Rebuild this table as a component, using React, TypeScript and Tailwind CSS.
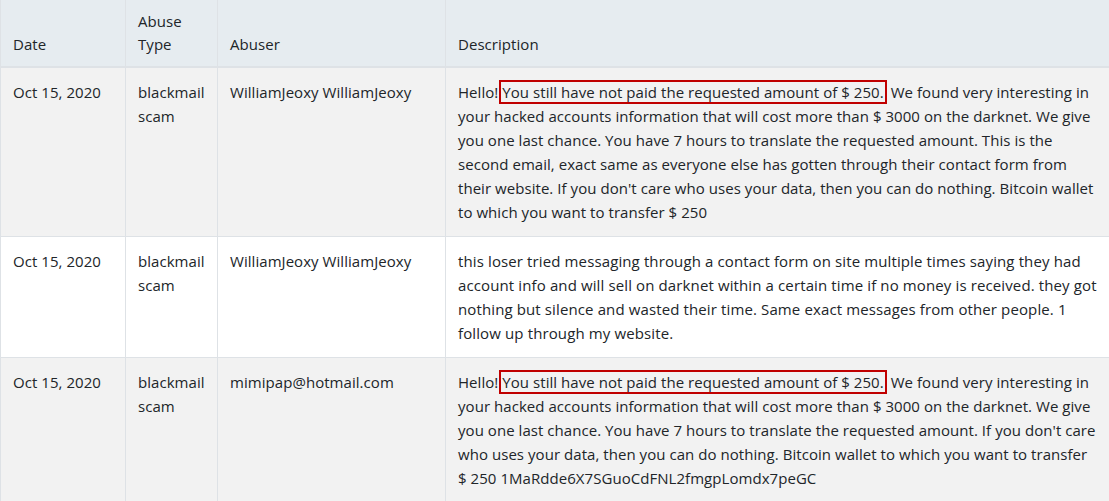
import React from "react";

type Report = {
  date: string;
  type: string;
  abuser: string;
  highlighted: boolean;
  before?: string;
  mark?: string;
  after: string;
};

const reports: Report[] = [
  {
    date: "Oct 15, 2020",
    type: "blackmail scam",
    abuser: "WilliamJeoxy WilliamJeoxy",
    highlighted: true,
    before: "Hello!",
    mark: "You still have not paid the requested amount of $ 250.",
    after:
      "We found very interesting in your hacked accounts information that will cost more than $ 3000 on the darknet. We give you one last chance. You have 7 hours to translate the requested amount. This is the second email, exact same as everyone else has gotten through their contact form from their website. If you don't care who uses your data, then you can do nothing. Bitcoin wallet to which you want to transfer $ 250",
  },
  {
    date: "Oct 15, 2020",
    type: "blackmail scam",
    abuser: "WilliamJeoxy WilliamJeoxy",
    highlighted: false,
    after:
      "this loser tried messaging through a contact form on site multiple times saying they had account info and will sell on darknet within a certain time if no money is received. they got nothing but silence and wasted their time. Same exact messages from other people. 1 follow up through my website.",
  },
  {
    date: "Oct 15, 2020",
    type: "blackmail scam",
    abuser: "mimipap@hotmail.com",
    highlighted: true,
    before: "Hello!",
    mark: "You still have not paid the requested amount of $ 250.",
    after:
      "We found very interesting in your hacked accounts information that will cost more than $ 3000 on the darknet. We give you one last chance. You have 7 hours to translate the requested amount. If you don't care who uses your data, then you can do nothing. Bitcoin wallet to which you want to transfer $ 250 1MaRdde6X7SGuoCdFNL2fmgpLomdx7peGC",
  },
];

const App: React.FC = () => {
  return (
    <div className="w-[1109px] h-[501px] overflow-hidden bg-white text-[#212529] font-['Open_Sans','Noto_Sans',sans-serif] text-[15px] leading-6 tracking-[0.05px]">
      <table className="w-[1110px] border-collapse table-fixed">
        <colgroup>
          <col className="w-[125px]" />
          <col className="w-[92px]" />
          <col className="w-[228px]" />
          <col />
        </colgroup>
        <thead>
          <tr className="bg-[#e6ecf0] h-[67px]">
            {["Date", "Abuse Type", "Abuser", "Description"].map((h) => (
              <th
                key={h}
                className="border border-[#dee2e6] border-b-2 border-t-0 px-3 pt-[8px] pb-[10px] align-bottom text-left font-normal leading-[23px]"
              >
                {h === "Abuse Type" ? (
                  <>
                    Abuse
                    <br />
                    Type
                  </>
                ) : (
                  h
                )}
              </th>
            ))}
          </tr>
        </thead>
        <tbody>
          {reports.map((r, i) => (
            <tr key={i} className={i % 2 === 0 ? "bg-[#f2f2f2]" : "bg-white"}>
              <td className="border border-[#dee2e6] px-3 py-3 align-top">{r.date}</td>
              <td className="border border-[#dee2e6] px-3 py-3 align-top">{r.type}</td>
              <td className="border border-[#dee2e6] px-3 py-3 align-top">{r.abuser}</td>
              <td
                className={`border border-[#dee2e6] px-3 py-3 align-top ${
                  r.highlighted ? "tracking-[0.05px]" : "tracking-[0.12px]"
                }`}
              >
                {r.highlighted ? (
                  <>
                    {r.before}
                    <span className="ml-[1px] border-2 border-[#c00000] px-[1px] py-0">{r.mark}</span>{" "}
                    {r.after}
                  </>
                ) : (
                  r.after
                )}
              </td>
            </tr>
          ))}
        </tbody>
      </table>
    </div>
  );
};

export default App;
